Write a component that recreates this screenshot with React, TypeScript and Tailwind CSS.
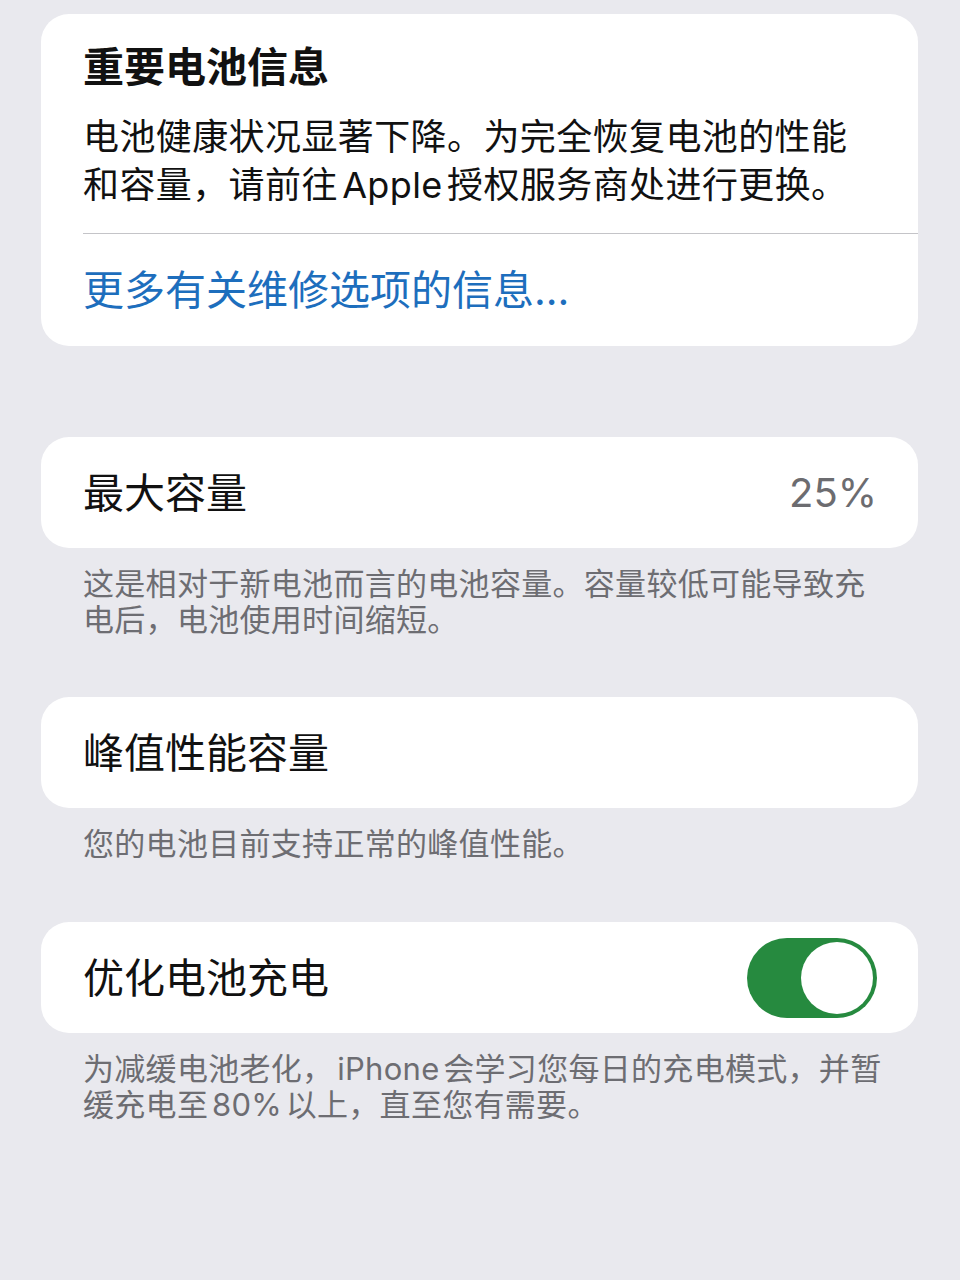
import React from "react";

const font = {
  fontFamily: 'Inter, "Noto Sans CJK SC", sans-serif',
};

// latin words between CJK get a small gap, narrower than a normal space
function Latin({ children }: { children: React.ReactNode }) {
  return <span className="mx-[0.12em]">{children}</span>;
}

function RowCard({
  label,
  children,
}: {
  label: string;
  children?: React.ReactNode;
}) {
  return (
    <div className="mx-[41px] mr-[42px] flex h-[111px] items-center justify-between rounded-[28px] bg-white pl-[42px] pr-[41px]">
      <span className="text-[41px] leading-[52px] text-[#111111]">{label}</span>
      {children}
    </div>
  );
}

function Footer({ children }: { children: React.ReactNode }) {
  return (
    <p className="mt-[18px] pl-[83px] pr-[72px] text-[31px] leading-[36px] tracking-[0.3px] text-[#6d6d72]">
      {children}
    </p>
  );
}

function Toggle() {
  return (
    <div className="flex h-[80px] w-[130px] items-center justify-end rounded-full bg-[#268a3f] p-[4px]">
      <div className="h-[72px] w-[72px] rounded-full bg-white" />
    </div>
  );
}

export default function App() {
  return (
    <div className="min-h-[1280px] bg-[#e9e9ee] pt-[14px]" style={font}>
      <div className="mx-[41px] mr-[42px] rounded-[28px] bg-white pl-[42px]">
        <div className="border-b border-[#c4c4c8] pb-[24px] pt-[27px]">
          <h1 className="text-[41px] font-bold leading-[52px] text-[#111111]">
            重要电池信息
          </h1>
          <p className="mt-[20px] pr-[50px] text-[36px] leading-[48px] tracking-[0.4px] text-[#111111]">
            电池健康状况显著下降。为完全恢复电池的性能和容量，请前往<Latin>Apple</Latin>授权服务商处进行更换。
          </p>
        </div>
        <div className="pb-[30px] pt-[30px]">
          <span className="text-[41px] leading-[52px] text-[#1d6ebd]">
            更多有关维修选项的信息...
          </span>
        </div>
      </div>

      <div className="mt-[91px]">
        <RowCard label="最大容量">
          <span className="text-[40px] leading-[52px] text-[#6c6c70]">25%</span>
        </RowCard>
        <Footer>
          这是相对于新电池而言的电池容量。容量较低可能导致充电后，电池使用时间缩短。
        </Footer>
      </div>

      <div className="mt-[59px]">
        <RowCard label="峰值性能容量" />
        <Footer>您的电池目前支持正常的峰值性能。</Footer>
      </div>

      <div className="mt-[60px]">
        <RowCard label="优化电池充电">
          <Toggle />
        </RowCard>
        <Footer>
          为减缓电池老化，<Latin>iPhone</Latin>会学习您每日的充电模式，并暂缓充电至<Latin>80%</Latin>以上，直至您有需要。
        </Footer>
      </div>
    </div>
  );
}
